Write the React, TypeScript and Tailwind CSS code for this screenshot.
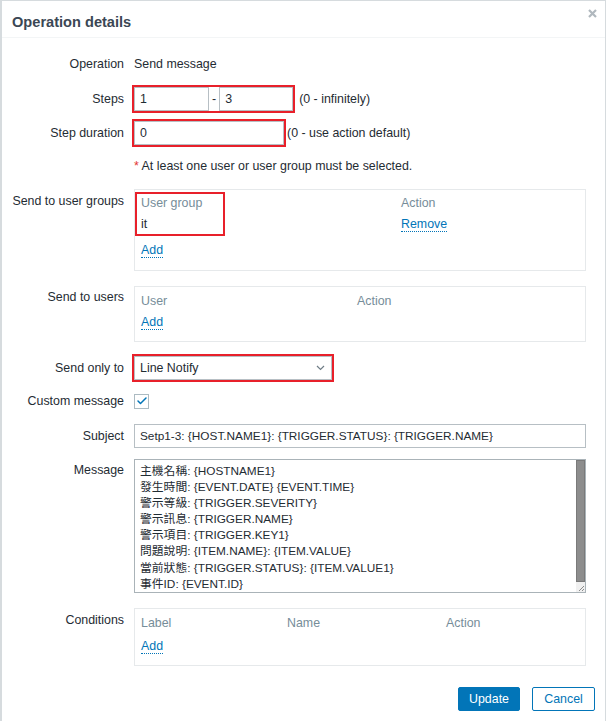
import { Check } from "lucide-react";

const font = "font-['Liberation_Sans','Noto_Sans_CJK_TC',sans-serif]";

const messageLines = [
  "主機名稱: {HOSTNAME1}",
  "發生時間: {EVENT.DATE} {EVENT.TIME}",
  "警示等級: {TRIGGER.SEVERITY}",
  "警示訊息: {TRIGGER.NAME}",
  "警示項目: {TRIGGER.KEY1}",
  "問題說明: {ITEM.NAME}: {ITEM.VALUE}",
  "當前狀態: {TRIGGER.STATUS}: {ITEM.VALUE1}",
  "事件ID: {EVENT.ID}",
];

function Label({ children, className = "" }: { children?: React.ReactNode; className?: string }) {
  return <div className={`w-[122px] shrink-0 text-right ${className}`}>{children}</div>;
}

function Link({ children }: { children: React.ReactNode }) {
  return (
    <span className="inline-block border-b border-dotted border-[#0275b8] leading-[14px] text-[#0275b8]">
      {children}
    </span>
  );
}

function Input({ value, className = "" }: { value: string; className?: string }) {
  return (
    <div className={`h-[24px] border border-[#b7bfc4] bg-white px-[5px] leading-[22px] ${className}`}>
      {value}
    </div>
  );
}

export default function App() {
  return (
    <div className={`h-[721px] w-[607px] bg-white text-[12.4px] text-[#1f2c33] ${font}`}>
      <div className="relative flex h-full w-[606px] flex-col border-l-2 border-r border-t border-[#d6dbde]">
        {/* header */}
        <div className="flex h-[37px] shrink-0 items-center border-b border-[#f3f5f6] pl-[10px] pt-[8px]">
          <h4 className="text-[14.6px] font-bold text-[#3b4754]">Operation details</h4>
        </div>
        <button type="button" className="absolute right-[8px] top-[8px] text-[#b0b8be]" aria-label="Close">
          <svg width="9" height="9" viewBox="0 0 9 9" stroke="currentColor" strokeWidth="2.2">
            <path d="M1 1l7 7M8 1l-7 7" />
          </svg>
        </button>

        {/* Operation */}
        <div className="mt-[14px] flex h-[24px] items-center">
          <Label>Operation</Label>
          <div className="ml-[10px]">Send message</div>
        </div>

        {/* Steps */}
        <div className="mt-[11px] flex items-center">
          <Label>Steps</Label>
          <div className="ml-[10px] flex items-center outline-2 outline-[#e8202a]">
            <Input value="1" className="w-[75px] border-[#0275b8]" />
            <span className="mx-[3px]">-</span>
            <Input value="3" className="w-[74px]" />
          </div>
          <span className="ml-[6px]">(0 - infinitely)</span>
        </div>

        {/* Step duration */}
        <div className="mt-[10px] flex items-center">
          <Label>Step duration</Label>
          <div className="ml-[10px] outline-2 outline-[#e8202a]">
            <Input value="0" className="w-[150px]" />
          </div>
          <span className="ml-[3px]">(0 - use action default)</span>
        </div>

        {/* required note */}
        <div className="mt-[9px] flex h-[24px] items-center">
          <Label />
          <div className="ml-[10px]">
            <span className="text-[#e33734]">*</span> At least one user or user group must be selected.
          </div>
        </div>

        {/* Send to user groups */}
        <div className="mt-[11px] flex">
          <Label className="pt-[2px] leading-[20px]">Send to user groups</Label>
          <div className="ml-[10px] w-[452px] border border-[#e6e9eb] px-[6px] pb-[9px] pt-[3px]">
            <div className="flex">
              <div className="w-[260px]">
                <div className="-ml-[5px] w-[88px] pl-[5px] outline-2 -outline-offset-1 outline-[#e8202a]">
                  <div className="h-[20px] leading-[20px] text-[#768d99]">User group</div>
                  <div className="h-[22px] leading-[22px]">it</div>
                </div>
              </div>
              <div>
                <div className="h-[20px] leading-[20px] text-[#768d99]">Action</div>
                <div className="h-[22px] leading-[22px]">
                  <Link>Remove</Link>
                </div>
              </div>
            </div>
            <div className="mt-[4px] flex h-[22px] items-center">
              <Link>Add</Link>
            </div>
          </div>
        </div>

        {/* Send to users */}
        <div className="mt-[15px] flex">
          <Label className="pt-[1px] leading-[20px]">Send to users</Label>
          <div className="ml-[10px] w-[452px] border border-[#e6e9eb] px-[6px] pb-[8px] pt-[4px]">
            <div className="flex h-[20px] leading-[20px] text-[#768d99]">
              <div className="w-[216px]">User</div>
              <div>Action</div>
            </div>
            <div className="flex h-[22px] items-center">
              <Link>Add</Link>
            </div>
          </div>
        </div>

        {/* Send only to */}
        <div className="mt-[14px] flex items-center">
          <Label>Send only to</Label>
          <div className="ml-[10px] outline-2 outline-[#e8202a]">
            <div className="flex h-[24px] w-[198px] items-center justify-between border border-[#b7bfc4] bg-white pl-[5px] pr-[6px]">
              <span>Line Notify</span>
              <svg width="9" height="6" viewBox="0 0 9 6" fill="none" stroke="#6f7d86" strokeWidth="1.2">
                <path d="M1 1l3.5 3.5L8 1" />
              </svg>
            </div>
          </div>
        </div>

        {/* Custom message */}
        <div className="mt-[9px] flex h-[24px] items-center">
          <Label>Custom message</Label>
          <div className="ml-[10px] flex h-[15px] w-[15px] items-center justify-center border border-[#acbbc2] bg-white">
            <Check size={12} strokeWidth={3} className="text-[#0275b8]" />
          </div>
        </div>

        {/* Subject */}
        <div className="mt-[11px] flex items-center">
          <Label>Subject</Label>
          <Input
            value="Setp1-3: {HOST.NAME1}: {TRIGGER.STATUS}: {TRIGGER.NAME}"
            className="ml-[10px] w-[452px] text-[11.8px]"
          />
        </div>

        {/* Message */}
        <div className="mt-[11px] flex">
          <Label className="leading-[22px]">Message</Label>
          <div className="ml-[10px] flex h-[134px] w-[452px] border border-[#aab3b8] bg-white">
            <div className="flex-1 pl-[5px] pt-[3px] text-[11.8px] leading-[16.1px]">
              {messageLines.map((line) => (
                <div key={line}>{line}</div>
              ))}
            </div>
            <div className="flex w-[9px] flex-col">
              <div className="h-[122px] border border-[#7a7a7a] bg-[#8d8d8d]" />
              <div className="relative flex-1 bg-[#f0f0f0]">
                <svg className="absolute bottom-[1px] right-[1px]" width="6" height="6" viewBox="0 0 6 6" stroke="#8a8a8a" strokeWidth="1">
                  <path d="M6 1L1 6M6 4L4 6" />
                </svg>
              </div>
            </div>
          </div>
        </div>

        {/* Conditions */}
        <div className="mt-[15px] flex">
          <Label className="leading-[24px]">Conditions</Label>
          <div className="ml-[10px] w-[452px] border border-[#e6e9eb] px-[6px] pb-[8px] pt-[4px]">
            <div className="flex h-[20px] leading-[20px] text-[#768d99]">
              <div className="w-[146px]">Label</div>
              <div className="w-[159px]">Name</div>
              <div>Action</div>
            </div>
            <div className="mt-[2px] flex h-[22px] items-center">
              <Link>Add</Link>
            </div>
          </div>
        </div>

        {/* footer */}
        <div className="mt-[21px] flex justify-end gap-[12px] pr-[10px]">
          <button
            type="button"
            className="h-[24px] w-[62px] rounded-[2px] border border-[#0275b8] bg-[#0275b8] text-white"
          >
            Update
          </button>
          <button
            type="button"
            className="h-[24px] w-[63px] rounded-[2px] border border-[#0275b8] bg-white text-[#0275b8]"
          >
            Cancel
          </button>
        </div>
      </div>
    </div>
  );
}
